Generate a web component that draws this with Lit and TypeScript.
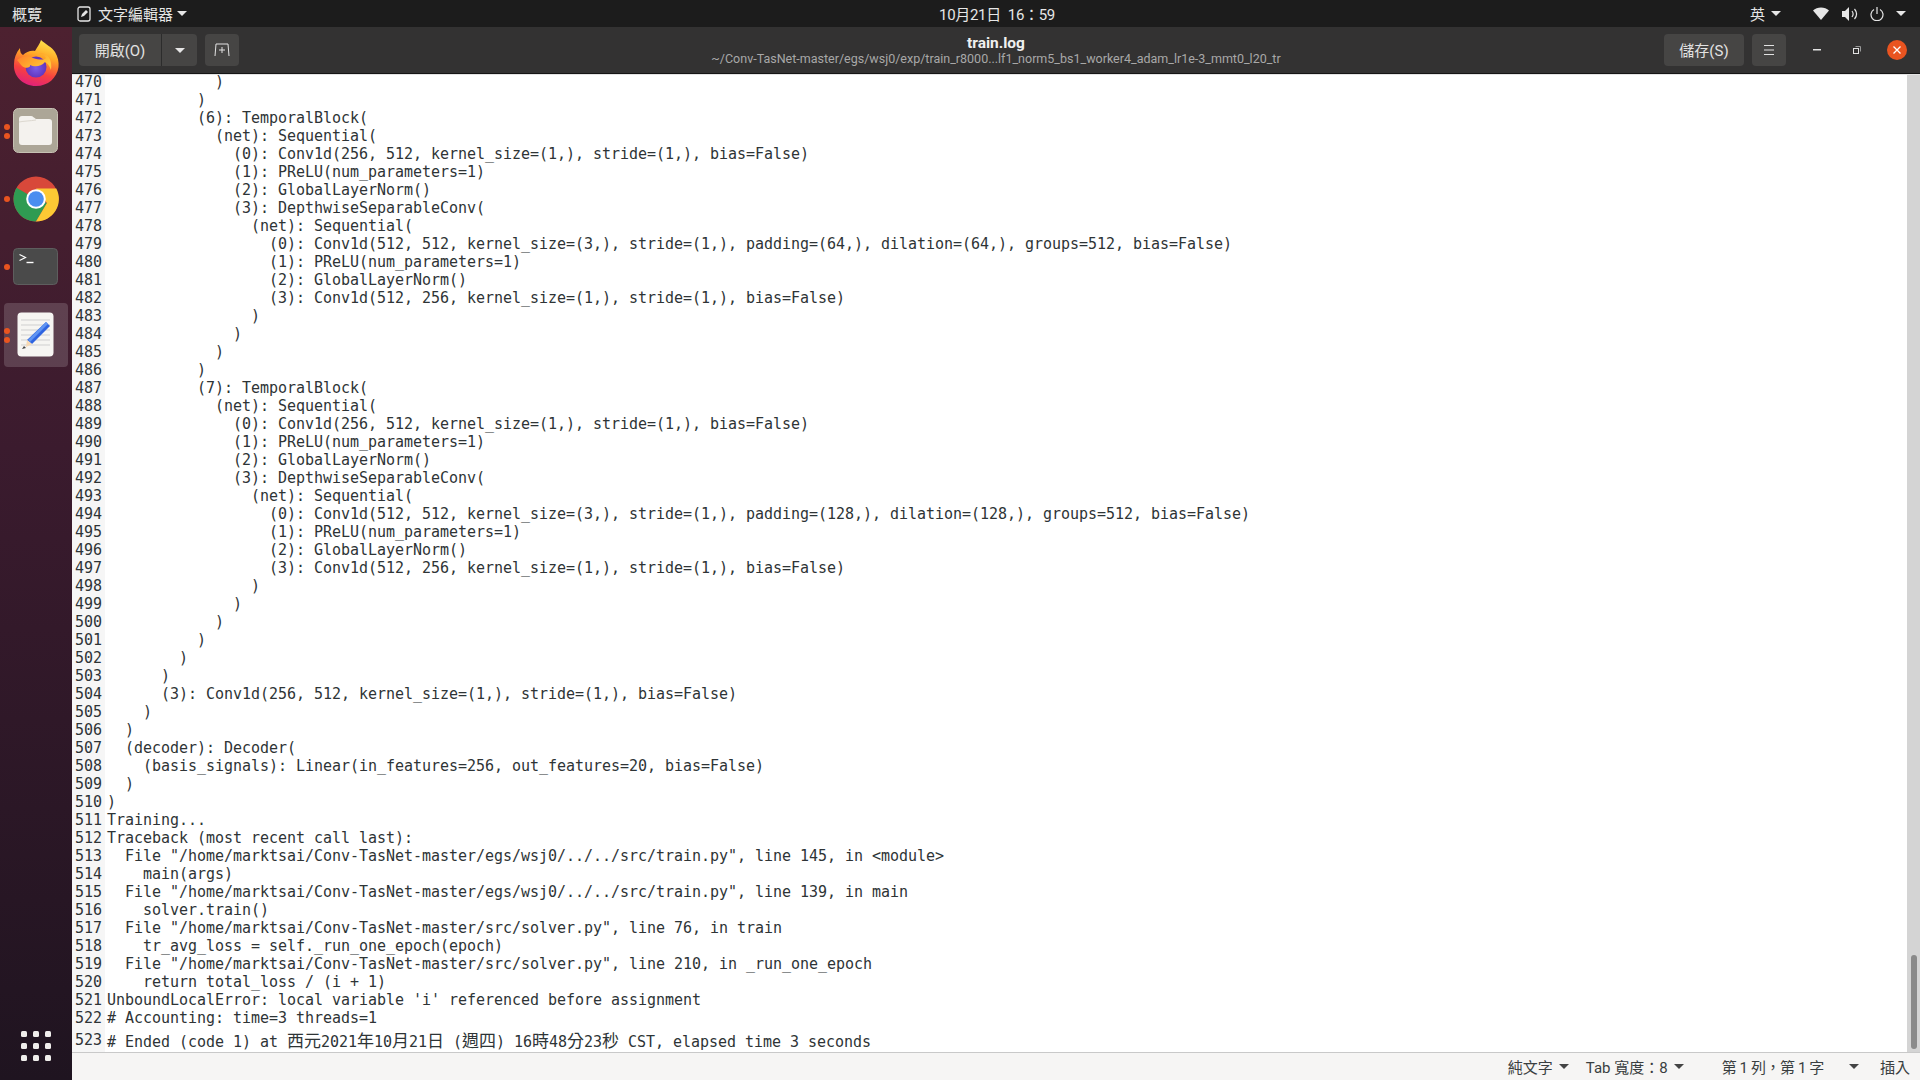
import { LitElement, html, css, svg } from "lit";
import { customElement } from "lit/decorators.js";

const block = (n: number, pad: number, dil: number) => [
  `          (${n}): TemporalBlock(`,
  `            (net): Sequential(`,
  `              (0): Conv1d(256, 512, kernel_size=(1,), stride=(1,), bias=False)`,
  `              (1): PReLU(num_parameters=1)`,
  `              (2): GlobalLayerNorm()`,
  `              (3): DepthwiseSeparableConv(`,
  `                (net): Sequential(`,
  `                  (0): Conv1d(512, 512, kernel_size=(3,), stride=(1,), padding=(${pad},), dilation=(${dil},), groups=512, bias=False)`,
  `                  (1): PReLU(num_parameters=1)`,
  `                  (2): GlobalLayerNorm()`,
  `                  (3): Conv1d(512, 256, kernel_size=(1,), stride=(1,), bias=False)`,
  `                )`,
  `              )`,
  `            )`,
  `          )`,
];

const LINES: string[] = [
  `            )`,
  `          )`,
  ...block(6, 64, 64),
  ...block(7, 128, 128),
  `        )`,
  `      )`,
  `      (3): Conv1d(256, 512, kernel_size=(1,), stride=(1,), bias=False)`,
  `    )`,
  `  )`,
  `  (decoder): Decoder(`,
  `    (basis_signals): Linear(in_features=256, out_features=20, bias=False)`,
  `  )`,
  `)`,
  `Training...`,
  `Traceback (most recent call last):`,
  `  File "/home/marktsai/Conv-TasNet-master/egs/wsj0/../../src/train.py", line 145, in <module>`,
  `    main(args)`,
  `  File "/home/marktsai/Conv-TasNet-master/egs/wsj0/../../src/train.py", line 139, in main`,
  `    solver.train()`,
  `  File "/home/marktsai/Conv-TasNet-master/src/solver.py", line 76, in train`,
  `    tr_avg_loss = self._run_one_epoch(epoch)`,
  `  File "/home/marktsai/Conv-TasNet-master/src/solver.py", line 210, in _run_one_epoch`,
  `    return total_loss / (i + 1)`,
  `UnboundLocalError: local variable 'i' referenced before assignment`,
  `# Accounting: time=3 threads=1`,
];

const caret = (cls = "") => html`<span class="caret ${cls}"></span>`;

const firefox = svg`<svg width="46" height="46" viewBox="0 0 46 46">
  <defs>
    <linearGradient id="ffo" x1="0.7" y1="0" x2="0.4" y2="1"><stop offset="0" stop-color="#ffe64d"/><stop offset="0.35" stop-color="#ffa726"/><stop offset="0.7" stop-color="#f8413f"/><stop offset="1" stop-color="#e0217a"/></linearGradient>
    <linearGradient id="ffh" x1="0" y1="0" x2="1" y2="0.6"><stop offset="0" stop-color="#ff7a2e"/><stop offset="0.5" stop-color="#ffa52c"/><stop offset="1" stop-color="#ffc93a"/></linearGradient>
    <radialGradient id="ffp" cx="0.5" cy="0.55" r="0.6"><stop offset="0" stop-color="#7b5ce8"/><stop offset="1" stop-color="#5b2cb2"/></radialGradient>
  </defs>
  <path d="M28 0C32 4 39 7 42 12C45 17 46 22 45.500 27C44 38 35 46 23 46C10 46 0 36 1 24C1 18 3 13 7 8C7 12 8 14 10 15C13 12 18 10 22 11C24 7 27 4 28 0z" fill="url(#ffo)"/>
  <circle cx="23" cy="27" r="10.500" fill="url(#ffp)"/>
  <path d="M4 20C9 16 16 15 20 18C26 20 31 20 33 18C31 14 28 13 25 14C33 11 40 19 38 30C36 25 34 23 32 22C28 27 21 27 17 25C18 28 12 29 9 26C7 24 6 22 4 20z" fill="url(#ffh)"/>
</svg>`;

const files = svg`<svg width="46" height="46" viewBox="0 0 46 46">
  <rect x="0.5" y="0.5" width="44" height="44" rx="5" fill="#aca697" stroke="#c6c1b3"/>
  <path d="M6 11a3 3 0 0 1 3-3h9c2 0 3 2 5 3h13a3 3 0 0 1 3 3v20a3 3 0 0 1-3 3H9a3 3 0 0 1-3-3z" fill="#f4f2ee"/>
  <path d="M6 14c5-1 11-1 17-2" stroke="#dcd8cf" fill="none"/>
</svg>`;

const chrome = svg`<svg width="46" height="46" viewBox="0 0 46 46">
  <circle cx="23" cy="23" r="22.500" fill="#d8483a"/>
  <path d="M23 23 L3.500 11.800 A22.500 22.500 0 0 0 23 45.500 L34 27z" fill="#2f9b52"/>
  <path d="M23 12.500 H43.300 A22.500 22.500 0 0 1 23 45.500 L34 27z" fill="#fcc934"/>
  <circle cx="23" cy="23" r="9.800" fill="#fff"/>
  <circle cx="23" cy="23" r="7.800" fill="#4a8ef0"/>
</svg>`;

const terminal = svg`<svg width="46" height="38" viewBox="0 0 46 38">
  <rect x="0.5" y="0.5" width="44" height="36" rx="4" fill="#4a4a4a" stroke="#5e5e5e"/>
  <path d="M6.500 6.500l6 3-6 3" stroke="#fff" stroke-width="1.200" fill="none"/>
  <path d="M13.500 14.500h7" stroke="#fff" stroke-width="1.400"/>
</svg>`;

const editor = svg`<svg width="38" height="46" viewBox="0 0 38 46">
  <rect x="0.5" y="0.5" width="36" height="44" rx="4" fill="#f6f5f2"/>
  <g stroke="#cfcfcf"><path d="M4 8h29M4 13h29M4 18h29M4 23h29M4 28h29M4 33h29"/></g>
  <path d="M29 10l4 4-18 18-5-4z" fill="#2f64e0"/>
  <path d="M29 10l2 2-18 18-2-2z" fill="#5f94f2"/>
  <path d="M10 28l5 4-6 3z" fill="#f6d9b5"/>
  <path d="M5 37l2-3 2 2z" fill="#444"/>
</svg>`;

const dots = [0, 1, 2, 3, 4, 5, 6, 7, 8];

@customElement("app-root")
export class AppRoot extends LitElement {
  static styles = css`
    :host { display: block; width: 1920px; height: 1080px; overflow: hidden; font-family: Roboto, "Noto Sans CJK TC", sans-serif; }
    .screen { display: grid; grid-template-rows: 27px 1fr; height: 1080px; }
    .top { background: #1c1c1c; color: #e6e6e6; display: grid; grid-template-columns: 1fr auto 1fr; align-items: center; font-size: 15px; }
    .top-l, .top-r { display: flex; align-items: center; }
    .top-r { justify-content: flex-end; padding-right: 14px; }
    .clock { margin-left: 74px; letter-spacing: -0.3px; }
    .ov { margin-left: 12px; width: 65px; }
    .doc { margin-right: 7px; display: block; }
    .caret { display: inline-block; width: 0; height: 0; border-left: 5px solid transparent; border-right: 5px solid transparent; border-top: 5px solid #e6e6e6; margin-left: 6px; }
    .caret.near { margin-left: 4px; }
    .main { display: grid; grid-template-columns: 72px 1fr; min-height: 0; }
    .dock { background: linear-gradient(180deg, #4d2130 0%, #3b1b2e 40%, #1f1420 100%); display: flex; flex-direction: column; align-items: center; position: relative; }
    .app { width: 64px; height: 64px; margin-top: 4px; display: flex; align-items: center; justify-content: center; border-radius: 4px; position: relative; }
    .app.active { background: rgba(255,255,255,0.16); }
    .pips { position: absolute; left: 0; top: 0; bottom: 0; display: flex; flex-direction: column; justify-content: center; gap: 3px; }
    .pip { width: 6px; height: 6px; border-radius: 50%; background: #e95420; }
    .grid { position: absolute; left: 21px; top: 1004px; display: grid; grid-template-columns: repeat(3, 6px); gap: 6px; }
    .grid i { width: 6px; height: 6px; background: #f0eeec; border-radius: 1.500px; }
    .win { display: grid; grid-template-rows: 46px 1fr 28px; min-height: 0; }
    .hdr { background: #333232; box-shadow: 0 1px 0 #151515, 0 2px 0 #e4e4e4; position: relative; z-index: 1; display: grid; grid-template-columns: 1fr auto 1fr; align-items: center; box-sizing: border-box; color: #dcdcdc; }
    .hl, .hr { display: flex; align-items: center; }
    .hl { padding-left: 7px; gap: 8px; }
    .hr { justify-content: flex-end; padding-right: 3px; }
    .btn { height: 32px; background: #464544; border-radius: 4px; display: flex; align-items: center; justify-content: center; font-size: 15px; color: #e2e2e2; box-sizing: border-box; }
    .open { display: flex; }
    .open .a { width: 83px; border-radius: 4px 0 0 4px; border-right: 1px solid #2c2c2c; padding-bottom: 2px; }
    .open .b { width: 35px; border-radius: 0 4px 4px 0; }
    .open .b .caret { margin-left: 0; }
    .sq { width: 34px; }
    .title { text-align: center; line-height: 16px; padding-top: 1px; }
    .t1 { font-weight: 700; font-size: 15.500px; color: #f0f0f0; }
    .t2 { font-size: 12.500px; color: #a8a8a8; }
    .save { width: 80px; margin-right: 8px; padding-bottom: 2px; }
    .wc { width: 40px; height: 32px; display: flex; justify-content: center; align-items: center; }
    .wc.first { margin-left: 11px; }
    .close { width: 20px; height: 20px; border-radius: 50%; background: #e95420; display: flex; align-items: center; justify-content: center; }
    .body { display: grid; grid-template-columns: 1fr 13px; min-height: 0; background: #fff; overflow: hidden; }
    .code { font-family: "DejaVu Sans Mono", "Noto Sans CJK TC", monospace; font-size: 15px; letter-spacing: -0.03px; color: #2e3436; min-width: 0; overflow: hidden; }
    .ln { display: grid; grid-template-columns: 33px 1fr; height: 18px; line-height: 18px; white-space: pre; }
    .ln.tall { height: 25px; line-height: 28px; }
    .no { background: #f6f6f6; text-align: right; padding-right: 3px; box-sizing: border-box; width: 33px; }
    .tx { padding-left: 2px; }
    .ln.tall .no { line-height: 26px; }
    .cjk { font-size: 17px; }
    .sb { background: #d4d4d4; position: relative; }
    .thumb { position: absolute; left: 4px; width: 6px; top: 882px; height: 94px; background: #8a8a8a; border-radius: 3px; }
    .status { background: #f6f5f4; border-top: 1px solid #c9c9c9; box-sizing: border-box; display: flex; align-items: center; justify-content: flex-end; font-size: 15px; color: #3a3f41; }
    .status .caret { border-top-color: #444; }
    .s { display: flex; align-items: center; }
    .s1 { margin-right: 17px; }
    .s2 { margin-right: 38px; }
    .s3 { letter-spacing: -0.4px; }
    .s4 { margin-left: 19px; margin-right: 21px; }
    .s5 { margin-right: 10px; }
  `;

  render() {
    const last = LINES.length;
    return html`<div class="screen">
      <div class="top">
        <div class="top-l">
          <span class="ov">概覽</span>
          <svg class="doc" width="14" height="16" viewBox="0 0 14 16"><rect x="1" y="1" width="12" height="14" rx="2" fill="none" stroke="#e6e6e6" stroke-width="1.300"/><path d="M4 11l1-3 4-4 2 2-4 4z" fill="#e6e6e6"/></svg>
          <span>文字編輯器</span>${caret("near")}
        </div>
        <div class="clock">10月21日&nbsp; 16：59</div>
        <div class="top-r">
          <span>英</span>${caret()}
          <svg style="margin-left:32px" width="16" height="14" viewBox="0 0 16 14"><path d="M0 3.500C4 -0.500 12 -0.500 16 3.500L8 13z" fill="#e6e6e6"/></svg>
          <svg style="margin-left:13px" width="16" height="14" viewBox="0 0 16 14"><path d="M0 4h3l4-4v14l-4-4H0z" fill="#e6e6e6"/><path d="M10 4c1.500 2 1.500 4 0 6M12.500 2c2.500 3 2.500 7 0 10" stroke="#e6e6e6" fill="none" stroke-width="1.200"/></svg>
          <svg style="margin-left:12px;margin-right:6px" width="14" height="14" viewBox="0 0 14 14"><path d="M4 2.500A6 6 0 1 0 10 2.500M7 0v7" stroke="#e6e6e6" fill="none" stroke-width="1.200"/></svg>
          ${caret()}
        </div>
      </div>
      <div class="main">
        <div class="dock">
          <div class="app">${firefox}</div>
          <div class="app"><div class="pips"><span class="pip"></span><span class="pip"></span></div>${files}</div>
          <div class="app"><div class="pips"><span class="pip"></span></div>${chrome}</div>
          <div class="app"><div class="pips"><span class="pip"></span></div>${terminal}</div>
          <div class="app active"><div class="pips"><span class="pip"></span><span class="pip"></span></div>${editor}</div>
          <div class="grid">${dots.map(() => html`<i></i>`)}</div>
        </div>
        <div class="win">
          <div class="hdr">
            <div class="hl">
              <div class="open"><div class="btn a">開啟(O)</div><div class="btn b">${caret()}</div></div>
              <div class="btn sq"><svg width="16" height="14" viewBox="0 0 16 14"><path d="M1 13L2 1h12l1 12" fill="none" stroke="#e2e2e2"/><path d="M8 4v6M5 7h6" stroke="#e2e2e2"/></svg></div>
            </div>
            <div class="title">
              <div class="t1">train.log</div>
              <div class="t2">~/Conv-TasNet-master/egs/wsj0/exp/train_r8000...lf1_norm5_bs1_worker4_adam_lr1e-3_mmt0_l20_tr</div>
            </div>
            <div class="hr">
              <div class="btn save">儲存(S)</div>
              <div class="btn sq"><svg width="12" height="10" viewBox="0 0 12 10"><path d="M1 .5h10M1 5h10M1 9.500h10" stroke="#e2e2e2"/></svg></div>
              <div class="wc first"><svg width="8" height="2"><rect width="8" height="1.500" fill="#e2e2e2"/></svg></div>
              <div class="wc"><svg width="8" height="8" viewBox="0 0 8 8"><rect x=".5" y="2.500" width="5" height="5" fill="none" stroke="#e2e2e2"/><path d="M2.500 .5h5v5" fill="none" stroke="#999"/></svg></div>
              <div class="wc"><div class="close"><svg width="8" height="8" viewBox="0 0 8 8"><path d="M.5 .5l7 7M7.500 .5l-7 7" stroke="#fff" stroke-width="1.300"/></svg></div></div>
            </div>
          </div>
          <div class="body">
            <div class="code">
              ${LINES.map((l, i) => html`<div class="ln"><span class="no">${470 + i}</span><span class="tx">${l}</span></div>`)}
              <div class="ln tall"><span class="no">${470 + last}</span><span class="tx"># Ended (code 1) at <span class="cjk">西元</span>2021<span class="cjk">年</span>10<span class="cjk">月</span>21<span class="cjk">日</span> (<span class="cjk">週四</span>) 16<span class="cjk">時</span>48<span class="cjk">分</span>23<span class="cjk">秒</span> CST, elapsed time 3 seconds</span></div>
            </div>
            <div class="sb"><div class="thumb"></div></div>
          </div>
          <div class="status">
            <span class="s s1">純文字${caret()}</span>
            <span class="s s2">Tab 寬度：8${caret()}</span>
            <span class="s s3">第 1 列，第 1 字</span>
            <span class="s s4">${caret()}</span>
            <span class="s s5">插入</span>
          </div>
        </div>
      </div>
    </div>`;
  }
}
